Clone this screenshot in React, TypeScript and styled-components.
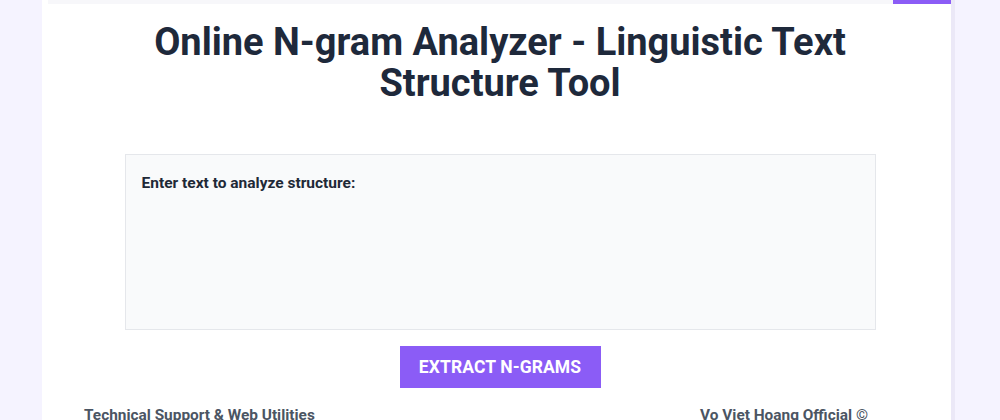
import React from "react";
import styled, { createGlobalStyle } from "styled-components";

const Global = createGlobalStyle`
  html, body { margin: 0; padding: 0; }
  body {
    background: #f5f3ff;
    font-family: Roboto, "Liberation Sans", sans-serif;
    height: 420px;
    overflow: hidden;
  }
`;

const Page = styled.div`
  display: flex;
  padding-left: 42px;
`;

const Container = styled.main`
  width: 909px;
  height: 420px;
  background: #ffffff;
  border-right: 4px solid #ebe8f7;
  display: flex;
  flex-direction: column;
  align-items: center;
  overflow: hidden;
`;

const TopStrip = styled.div`
  align-self: stretch;
  flex-shrink: 0;
  display: flex;
  height: 4px;
  padding-left: 6px;
`;

const StripGray = styled.div`
  flex: 1;
  background: #f7f7fa;
`;

const StripAccent = styled.div`
  width: 58px;
  background: #8b5cf6;
`;

const Content = styled.div`
  flex-shrink: 0;
  width: 916px;
  display: flex;
  flex-direction: column;
  align-items: center;
  margin-right: -7px;
`;

const Title = styled.h1`
  margin: 18px 0 0;
  width: 760px;
  text-align: center;
  font-size: 38px;
  line-height: 41px;
  font-weight: 700;
  color: #1e293b;
`;

const InputCard = styled.div`
  margin-top: 50px;
  width: 751px;
  height: 176px;
  box-sizing: border-box;
  background: #f9fafb;
  border: 1px solid #e5e7eb;
  padding: 18px 16px;
  display: flex;
  flex-direction: column;
`;

const Label = styled.label`
  font-size: 15.5px;
  font-weight: 700;
  color: #1f2937;
  line-height: 20px;
`;

const TextArea = styled.textarea`
  flex: 1;
  margin-top: 8px;
  border: none;
  background: transparent;
  resize: none;
  outline: none;
  font-family: inherit;
  font-size: 15px;
`;

const Button = styled.button`
  flex-shrink: 0;
  margin-top: 16px;
  width: 201px;
  height: 42px;
  border: none;
  background: #8b5cf6;
  color: #ffffff;
  font-family: Roboto, "Liberation Sans", sans-serif;
  font-size: 17.5px;
  font-weight: 700;
  text-transform: uppercase;
  letter-spacing: 0.1px;
  cursor: pointer;
`;

const Footer = styled.footer`
  flex-shrink: 0;
  align-self: stretch;
  display: flex;
  justify-content: space-between;
  margin-top: 18px;
  padding: 0 83px 0 42px;
`;

const FooterText = styled.span`
  font-size: 15.4px;
  font-weight: 700;
  color: #4b5563;
`;

export default function App() {
  return (
    <>
      <Global />
      <Page>
        <Container>
          <TopStrip>
            <StripGray />
            <StripAccent />
          </TopStrip>
          <Content>
            <Title>Online N-gram Analyzer - Linguistic Text Structure Tool</Title>
            <InputCard>
              <Label htmlFor="ngram-input">Enter text to analyze structure:</Label>
              <TextArea id="ngram-input" />
            </InputCard>
            <Button>Extract N-grams</Button>
          </Content>
          <Footer>
            <FooterText>Technical Support &amp; Web Utilities</FooterText>
            <FooterText>Vo Viet Hoang Official ©</FooterText>
          </Footer>
        </Container>
      </Page>
    </>
  );
}
